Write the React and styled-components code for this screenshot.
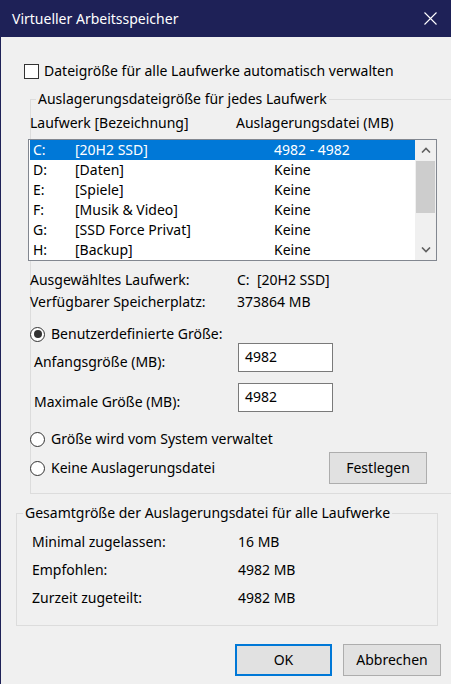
import React from 'react';
import styled, { createGlobalStyle } from 'styled-components';

const GlobalStyle = createGlobalStyle`
  html, body {
    margin: 0;
    padding: 0;
    background: #f0f0f0;
  }
  body {
    font-family: "Noto Sans", "Liberation Sans", sans-serif;
    font-size: 14px;
    color: #000;
  }
`;

const Window = styled.div`
  width: 451px;
  height: 684px;
  box-sizing: border-box;
  border-left: 1px solid #1e2157;
  background: #f0f0f0;
  overflow: hidden;
  display: flex;
  flex-direction: column;
`;

const TitleBar = styled.div`
  height: 37px;
  flex-shrink: 0;
  background: #1e2157;
  color: #fff;
  display: flex;
  align-items: center;
  justify-content: space-between;
  padding: 0 14px 0 11px;
  font-size: 14px;
`;

const Body = styled.div`
  flex: 1;
  display: flex;
  flex-direction: column;
  padding: 0 10px 0 15px;
  line-height: 20px;
`;

const CheckRow = styled.label`
  display: flex;
  align-items: center;
  gap: 5px;
  margin: 24px 0 0 8px;
  height: 20px;
`;

const CheckBox = styled.span`
  width: 13px;
  height: 13px;
  border: 1px solid #333;
  background: #fff;
  flex-shrink: 0;
`;

const Group = styled.section`
  position: relative;
  margin-left: ${p => p.$left}px;
  margin-top: ${p => p.$top}px;
  width: ${p => p.$width};
  height: ${p => p.$height}px;
  box-sizing: border-box;

  &::before {
    content: "";
    position: absolute;
    top: 10px;
    left: 0;
    right: 0;
    bottom: 0;
    border: 1px solid #dcdcdc;
    pointer-events: none;
  }
`;

const Legend = styled.div`
  position: relative;
  display: inline-block;
  margin-left: ${p => p.$indent}px;
  padding: 0 2px;
  background: #f0f0f0;
  height: 20px;
`;

const Content = styled.div`
  position: relative;
  display: flex;
  flex-direction: column;
`;

const ColumnHeader = styled.div`
  display: grid;
  grid-template-columns: 206px auto;
  margin-top: 4px;
`;

const ListBox = styled.div`
  margin: 6px 0 0 -2px;
  width: 409px;
  height: 122px;
  box-sizing: border-box;
  border: 1px solid #828790;
  background: #fff;
  display: flex;
  padding-left: 1px;
`;

const Rows = styled.div`
  flex: 1;
`;

const Row = styled.div`
  display: grid;
  grid-template-columns: 42px 199px auto;
  height: 20px;
  padding-left: 3px;
  background: ${p => (p.$selected ? '#0078d7' : 'transparent')};
  color: ${p => (p.$selected ? '#fff' : '#000')};
`;

const ScrollBar = styled.div`
  width: 21px;
  background: #f0f0f0;
  display: flex;
  flex-direction: column;
  align-items: center;
`;

const ArrowButton = styled.div`
  height: 20px;
  width: 100%;
  display: flex;
  align-items: center;
  justify-content: center;
`;

const Thumb = styled.div`
  width: 19px;
  height: 52px;
  margin-top: 1px;
  background: #cdcdcd;
`;

const Track = styled.div`
  flex: 1;
`;

const InfoGrid = styled.div`
  display: grid;
  grid-template-columns: 207px auto;
  row-gap: 2px;
  margin-top: 9px;
`;

const RadioRow = styled.div`
  display: flex;
  align-items: center;
  gap: 6px;
  height: ${p => p.$height || 20}px;
  margin-top: ${p => p.$top}px;
  width: 397px;
`;

const Radio = styled.span`
  width: 13px;
  height: 13px;
  border: 1px solid #333;
  border-radius: 50%;
  background: #fff;
  flex-shrink: 0;
  display: flex;
  align-items: center;
  justify-content: center;

  &::after {
    content: "";
    width: 8px;
    height: 8px;
    border-radius: 50%;
    background: ${p => (p.$checked ? '#333' : 'transparent')};
  }
`;

const FieldRow = styled.div`
  display: grid;
  grid-template-columns: 204px 95px;
  align-items: start;
  margin-top: ${p => p.$top}px;
  padding-left: 4px;
`;

const FieldLabel = styled.span`
  margin-top: 9px;
`;

const TextBox = styled.div`
  width: 95px;
  height: 29px;
  box-sizing: border-box;
  border: 1px solid #7a7a7a;
  background: #fff;
  padding: 3px 0 0 6px;
`;

const Button = styled.button`
  font: inherit;
  line-height: 20px;
  color: #000;
  width: ${p => p.$width || 98}px;
  height: 32px;
  box-sizing: border-box;
  background: #e1e1e1;
  border: ${p => (p.$default ? '2px solid #0078d7' : '1px solid #adadad')};
  padding: 0;
  margin-left: ${p => (p.$push ? 'auto' : '0')};
`;

const TotalsGrid = styled.div`
  display: grid;
  grid-template-columns: 206px auto;
  grid-auto-rows: 28px;
  align-items: center;
  margin-top: 5px;
  padding-left: 16px;
`;

const ButtonBar = styled.div`
  display: flex;
  justify-content: flex-end;
  gap: 11px;
  margin-top: 18px;
`;

const drives = [
  ['C:', '[20H2 SSD]', '4982 - 4982'],
  ['D:', '[Daten]', 'Keine'],
  ['E:', '[Spiele]', 'Keine'],
  ['F:', '[Musik & Video]', 'Keine'],
  ['G:', '[SSD Force Privat]', 'Keine'],
  ['H:', '[Backup]', 'Keine'],
];

const Chevron = ({ up }) => (
  <svg width="10" height="6" viewBox="0 0 10 6">
    <path
      d={up ? 'M1 5.5 L5 1.5 L9 5.5' : 'M1 0.5 L5 4.5 L9 0.5'}
      fill="none"
      stroke="#606060"
      strokeWidth="1.6"
    />
  </svg>
);

const CloseIcon = () => (
  <svg width="13" height="13" viewBox="0 0 13 13">
    <path d="M0.5 0.5 L12.5 12.5 M12.5 0.5 L0.5 12.5" stroke="#fff" strokeWidth="1.1" />
  </svg>
);

export default function App() {
  return (
    <>
      <GlobalStyle />
      <Window>
        <TitleBar>
          <span>Virtueller Arbeitsspeicher</span>
          <CloseIcon />
        </TitleBar>
        <Body>
          <CheckRow>
            <CheckBox />
            Dateigröße für alle Laufwerke automatisch verwalten
          </CheckRow>

          <Group $left={14} $top={8} $width="460px" $height={405}>
            <Legend $indent={6}>Auslagerungsdateigröße für jedes Laufwerk</Legend>
            <Content>
              <ColumnHeader>
                <span>Laufwerk [Bezeichnung]</span>
                <span>Auslagerungsdatei (MB)</span>
              </ColumnHeader>
              <ListBox>
                <Rows>
                  {drives.map(([letter, label, size], i) => (
                    <Row key={letter} $selected={i === 0}>
                      <span>{letter}</span>
                      <span>{label}</span>
                      <span>{size}</span>
                    </Row>
                  ))}
                </Rows>
                <ScrollBar>
                  <ArrowButton><Chevron up /></ArrowButton>
                  <Thumb />
                  <Track />
                  <ArrowButton><Chevron /></ArrowButton>
                </ScrollBar>
              </ListBox>

              <InfoGrid>
                <span>Ausgewähltes Laufwerk:</span>
                <span>C:&nbsp; [20H2 SSD]</span>
                <span>Verfügbarer Speicherplatz:</span>
                <span>373864 MB</span>
              </InfoGrid>

              <RadioRow $top={12}>
                <Radio $checked />
                Benutzerdefinierte Größe:
              </RadioRow>
              <FieldRow $top={-1}>
                <FieldLabel>Anfangsgröße (MB):</FieldLabel>
                <TextBox>4982</TextBox>
              </FieldRow>
              <FieldRow $top={11}>
                <FieldLabel>Maximale Größe (MB):</FieldLabel>
                <TextBox>4982</TextBox>
              </FieldRow>
              <RadioRow $top={17}>
                <Radio />
                Größe wird vom System verwaltet
              </RadioRow>
              <RadioRow $top={3} $height={32}>
                <Radio />
                Keine Auslagerungsdatei
                <Button $push>Festlegen</Button>
              </RadioRow>
            </Content>
          </Group>

          <Group $left={0} $top={9} $width="422px" $height={123}>
            <Legend $indent={7}>Gesamtgröße der Auslagerungsdatei für alle Laufwerke</Legend>
            <Content>
              <TotalsGrid>
                <span>Minimal zugelassen:</span>
                <span>16 MB</span>
                <span>Empfohlen:</span>
                <span>4982 MB</span>
                <span>Zurzeit zugeteilt:</span>
                <span>4982 MB</span>
              </TotalsGrid>
            </Content>
          </Group>

          <ButtonBar>
            <Button $default $width={97}>OK</Button>
            <Button>Abbrechen</Button>
          </ButtonBar>
        </Body>
      </Window>
    </>
  );
}
